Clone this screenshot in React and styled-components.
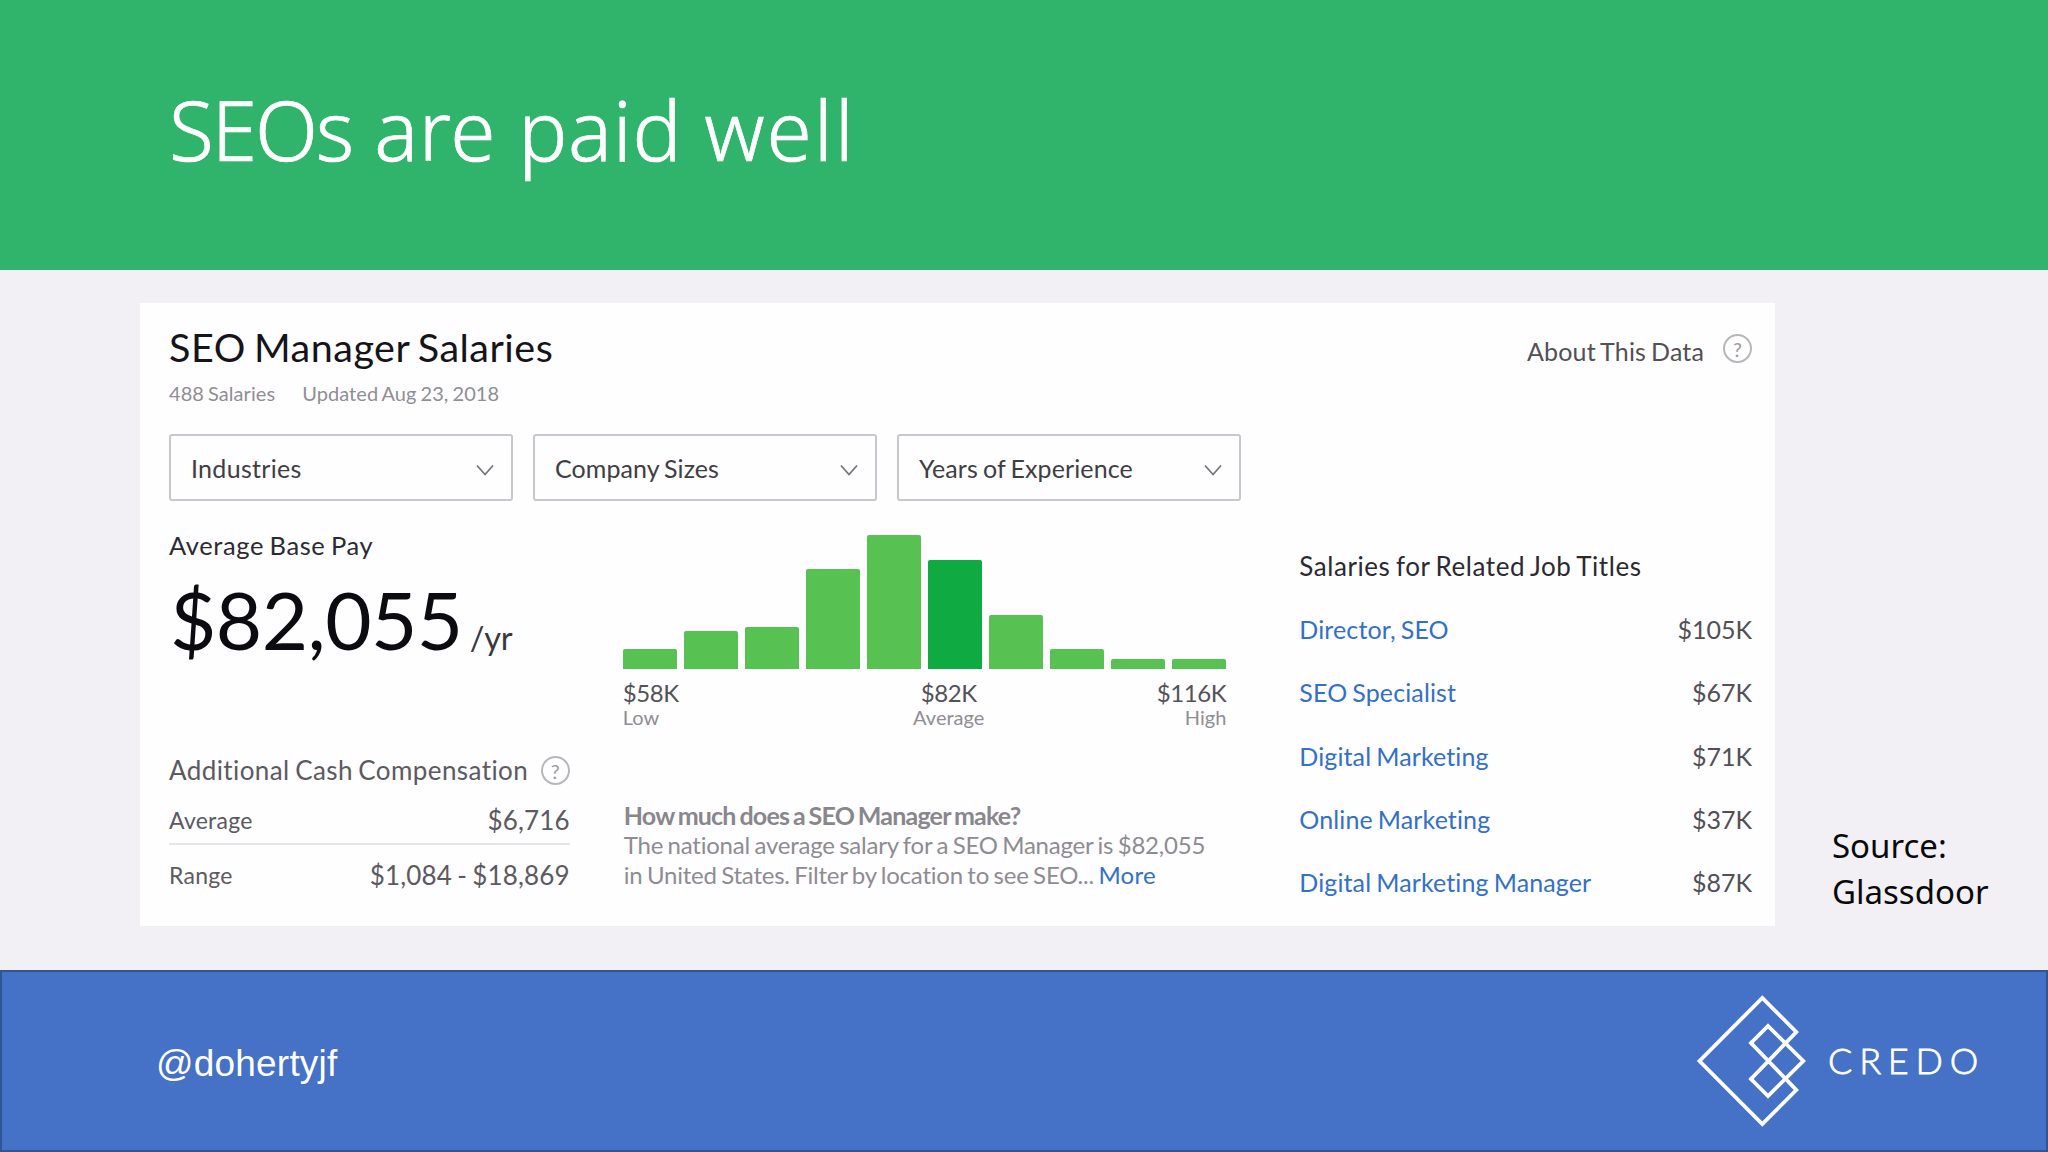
import styled, { createGlobalStyle } from "styled-components";

const GlobalStyle = createGlobalStyle`
    * { box-sizing: border-box; }
    body {
        margin: 0;
        background: #f2f0f4;
        font-family: Lato, "Open Sans", sans-serif;
    }
`;

const Slide = styled.div`
    width: 2048px;
    height: 1152px;
    display: flex;
    flex-direction: column;
    overflow: hidden;
`;

const Header = styled.header`
    height: 270px;
    padding: 79px 0 0 169px;
    background: #30b36b;
`;
const SlideTitle = styled.h1`
    margin: 0;
    font: 300 82px/100px "Noto Sans", "Open Sans", sans-serif;
    letter-spacing: 0.7px;
    -webkit-text-stroke: 0.7px white;
    color: white;
`;
const Word = styled.span`
    letter-spacing: ${(p) => p.$spacing}px;
`;

const Main = styled.main`
    height: 700px;
    display: flex;
    align-items: flex-start;
    padding: 33px 0 0 140px;
`;
const Card = styled.section`
    width: 1635px;
    height: 623px;
    padding: 20px 23px 0 29px;
    background: #fefdff;

    * {
        word-spacing: -0.06em;
    }
`;
const Source = styled.div`
    width: 180px;
    margin: 520px 0 0 57px;
    font: 400 33px/46px "Noto Sans", "Open Sans", sans-serif;
    color: #0a0a0c;
`;

const CardTop = styled.div`
    display: flex;
    justify-content: space-between;
`;
const CardTitle = styled.h2`
    margin: 0;
    font-size: 39.5px;
    font-weight: 400;
    line-height: 48px;
    letter-spacing: 0.5px;
    color: #151418;
`;
const Meta = styled.div`
    display: flex;
    gap: 27px;
    margin-top: 10px;
    font-size: 20px;
    line-height: 24px;
    letter-spacing: 0.07px;
    color: #908e93;
`;
const About = styled.div`
    display: flex;
    height: 30px;
    margin-top: 13px;
    gap: 19px;
    font-size: 25px;
    line-height: 30px;
    letter-spacing: 0.15px;
    color: #525055;
`;
const Help = styled.span`
    flex: none;
    display: flex;
    justify-content: center;
    align-items: center;
    width: 29px;
    height: 29px;
    margin-top: ${(p) => p.$top || 0}px;
    border: 2px solid #b8b6bb;
    border-radius: 50%;
    font-size: 20px;
    line-height: 20px;
    letter-spacing: 0;
    color: #9c9a9f;
`;

const Filters = styled.div`
    display: flex;
    gap: 20px;
    margin-top: 29px;
`;
const Select = styled.div`
    width: 344px;
    height: 67px;
    display: flex;
    justify-content: space-between;
    align-items: center;
    padding: 0 17px 0 20px;
    border: 2px solid #c9c7cb;
    border-radius: 3px;
    font-size: 25px;
    line-height: 30px;
    letter-spacing: ${(p) => p.$spacing || 0}px;
    color: #403e43;

    svg {
        margin-top: 4px;
    }
`;

const Columns = styled.div`
    display: flex;
`;
const PayColumn = styled.div`
    width: 401px;
    padding-top: 29px;
`;
const PayLabel = styled.div`
    font-size: 25.5px;
    line-height: 30px;
    letter-spacing: 0.6px;
    color: #2c2a2f;
`;
const Pay = styled.div`
    display: flex;
    align-items: baseline;
    gap: 7px;
    height: 96px;
    margin-top: 11px;
    padding-left: 1px;
    font-size: 80px;
    line-height: 96px;
    letter-spacing: -0.55px;
    color: #0c0b0f;
`;
const PerYear = styled.span`
    font-size: 32.5px;
    letter-spacing: -0.2px;
    color: #3a383d;
`;
const CashTitle = styled.div`
    display: flex;
    justify-content: space-between;
    height: 32px;
    margin-top: 87px;
    font-size: 26px;
    line-height: 32px;
    letter-spacing: 0.41px;
    white-space: nowrap;
    color: #5c5a5f;
`;
const CashRow = styled.div`
    display: flex;
    justify-content: space-between;
    align-items: center;
    padding: ${(p) => (p.$line ? "17px 0 6px" : "13px 0 0")};
    border-bottom: ${(p) => (p.$line ? "2px solid #e6e4e9" : "none")};
    font-size: 23px;
    line-height: 34px;
    letter-spacing: 0.25px;
    color: #5c5a5f;
`;
const CashValue = styled.span`
    font-size: 26px;
    letter-spacing: 0.15px;
`;

const ChartColumn = styled.div`
    width: 604px;
    margin-left: 53px;
    padding-top: 34px;
`;
const Bars = styled.div`
    display: flex;
    align-items: flex-end;
    gap: 7px;
    height: 134px;
`;
const Bar = styled.div`
    flex: 1;
    border-radius: 2px 2px 0 0;
    background: ${(p) => (p.$active ? "#0faa41" : "#57c151")};
`;
const Scale = styled.div`
    display: grid;
    grid-template-columns: 290px 72px 1fr;
    margin-top: 10px;
    color: #545257;
`;
const Mark = styled.div`
    text-align: ${(p) => p.$align};
    font-size: 24px;
    line-height: 27px;
    letter-spacing: -0.4px;
`;
const MarkName = styled.div`
    font-size: 20px;
    line-height: 23px;
    letter-spacing: 0;
    color: #908e93;
`;
const Summary = styled.div`
    margin-top: 71px;
    padding-left: 1px;
    font-size: 24px;
    line-height: 30px;
    letter-spacing: -0.22px;
    white-space: nowrap;
    color: #8e8c91;
`;
const Question = styled.div`
    font-size: 25px;
    font-weight: 700;
    letter-spacing: -0.8px;
    color: #89878c;
`;
const Link = styled.a`
    color: #3370c8;
`;
const MoreLink = styled(Link)`
    letter-spacing: 0.25px;
`;

const JobsColumn = styled.div`
    width: 453px;
    margin-left: 73px;
    padding-top: 50px;
`;
const JobsTitle = styled.div`
    margin-bottom: 17px;
    font-size: 26px;
    line-height: 30px;
    letter-spacing: 0.55px;
    white-space: nowrap;
    color: #2c2a2f;
`;
const Job = styled.div`
    display: flex;
    justify-content: space-between;
    font-size: 25px;
    line-height: 63.3px;
    letter-spacing: 0.12px;
    color: #525055;
`;
const Salary = styled.span`
    letter-spacing: 0;
`;

const Footer = styled.footer`
    height: 182px;
    display: flex;
    justify-content: space-between;
    align-items: center;
    padding-left: 154px;
    border: 2px solid #2f5597;
    background: #4571c6;
    color: white;
`;
const Handle = styled.div`
    padding-top: 5px;
    font: 400 37px/44px "Liberation Sans", Arial, sans-serif;
    letter-spacing: 0.2px;
`;
const Brand = styled.div`
    display: flex;
    align-items: center;
    gap: 20px;
    width: 350px;
`;
const BrandName = styled.span`
    padding-bottom: 2px;
    font-size: 36px;
    font-weight: 300;
    letter-spacing: 6.8px;
    -webkit-text-stroke: 0.8px white;
`;

const filters = [
    { name: "Industries", spacing: 0.3 },
    { name: "Company Sizes", spacing: 0.08 },
    { name: "Years of Experience", spacing: 0.12 },
];

const bars = [20, 38, 42, 100, 134, 109, 54, 20, 10, 10];

const jobs = [
    ["Director, SEO", "$105K"],
    ["SEO Specialist", "$67K"],
    ["Digital Marketing", "$71K"],
    ["Online Marketing", "$37K"],
    ["Digital Marketing Manager", "$87K"],
];

const Chevron = () => (
    <svg width="18" height="12" viewBox="0 0 18 12" fill="none" stroke="#77757a" strokeWidth="1.8">
        <path d="M1 1.5 L9 10.5 L17 1.5" />
    </svg>
);

const Logo = () => (
    <svg width="112" height="136" viewBox="0 0 112 136" fill="none" stroke="white" strokeWidth="3.8">
        {/* big open diamond, its ends run into the small ones */}
        <path d="M55 86 L100.3 39 L66.3 4.9 L3.5 68 L66.3 131.1 L100.3 97 L55 50" />
        <path d="M55 50 L72 33 L107.3 68 L72 103 L55 86" />
        <path d="M57 84 L55 86 L57 88 M57 48 L55 50 L57 52" />
    </svg>
);

export default function App() {
    return (
        <Slide>
            <GlobalStyle />
            <Header>
                <SlideTitle>
                    <Word $spacing={-2.1}>SEOs</Word> are paid <Word $spacing={1.9}>well</Word>
                </SlideTitle>
            </Header>

            <Main>
                <Card>
                    <CardTop>
                        <div>
                            <CardTitle>SEO Manager Salaries</CardTitle>
                            <Meta>
                                <span>488 Salaries</span>
                                <span>Updated Aug 23, 2018</span>
                            </Meta>
                        </div>
                        <About>
                            About This Data
                            <Help $top={-2}>?</Help>
                        </About>
                    </CardTop>

                    <Filters>
                        {filters.map((f) => (
                            <Select key={f.name} $spacing={f.spacing}>
                                {f.name}
                                <Chevron />
                            </Select>
                        ))}
                    </Filters>

                    <Columns>
                        <PayColumn>
                            <PayLabel>Average Base Pay</PayLabel>
                            <Pay>
                                $82,055
                                <PerYear>/yr</PerYear>
                            </Pay>
                            <CashTitle>
                                Additional Cash Compensation
                                <Help $top={2}>?</Help>
                            </CashTitle>
                            <CashRow $line>
                                Average
                                <CashValue>$6,716</CashValue>
                            </CashRow>
                            <CashRow>
                                Range
                                <CashValue>$1,084 - $18,869</CashValue>
                            </CashRow>
                        </PayColumn>

                        <ChartColumn>
                            <Bars>
                                {bars.map((h, i) => (
                                    <Bar key={i} $active={i === 5} style={{ height: h }} />
                                ))}
                            </Bars>
                            <Scale>
                                <Mark $align="left">
                                    $58K
                                    <MarkName>Low</MarkName>
                                </Mark>
                                <Mark $align="center">
                                    $82K
                                    <MarkName>Average</MarkName>
                                </Mark>
                                <Mark $align="right">
                                    $116K
                                    <MarkName>High</MarkName>
                                </Mark>
                            </Scale>
                            <Summary>
                                <Question>How much does a SEO Manager make?</Question>
                                The national average salary for a SEO Manager is $82,055
                                <br />
                                in United States. Filter by location to see SEO... <MoreLink>More</MoreLink>
                            </Summary>
                        </ChartColumn>

                        <JobsColumn>
                            <JobsTitle>Salaries for Related Job Titles</JobsTitle>
                            {jobs.map(([title, salary]) => (
                                <Job key={title}>
                                    <Link>{title}</Link>
                                    <Salary>{salary}</Salary>
                                </Job>
                            ))}
                        </JobsColumn>
                    </Columns>
                </Card>
                <Source>
                    Source:
                    <br />
                    Glassdoor
                </Source>
            </Main>

            <Footer>
                <Handle>@dohertyjf</Handle>
                <Brand>
                    <Logo />
                    <BrandName>CREDO</BrandName>
                </Brand>
            </Footer>
        </Slide>
    );
}
